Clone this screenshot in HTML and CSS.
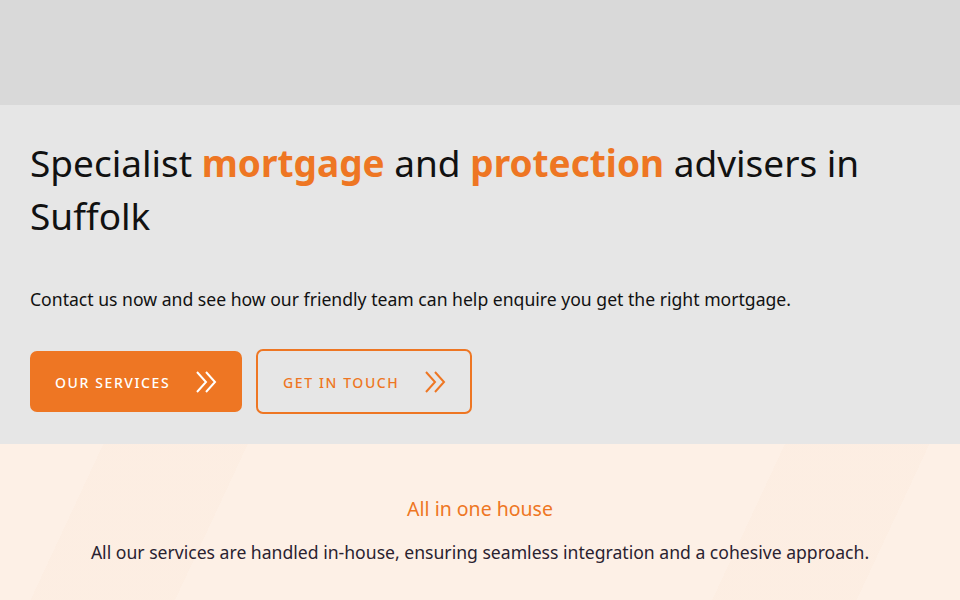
FILE: index.html
```html
<!DOCTYPE html>
<html lang="en">
<head>
<meta charset="utf-8">
<title>Specialist mortgage and protection advisers in Suffolk</title>
<link rel="stylesheet" href="styles.css">
</head>
<body>
<header class="topbar"></header>
<section class="hero">
  <h1 class="hero-title">Specialist <strong>mortgage</strong> and <strong>protection</strong> advisers in Suffolk</h1>
  <p class="hero-text">Contact us now and see how our friendly team can help enquire you get the right mortgage.</p>
  <div class="hero-actions">
    <a class="btn btn-solid" href="#"><span class="btn-label">OUR SERVICES</span>
      <svg class="chev" viewBox="0 0 24 22" width="24" height="22"><polyline points="2,1 11,11 2,21"/><polyline points="11,1 20,11 11,21"/></svg>
    </a>
    <a class="btn btn-outline" href="#"><span class="btn-label">GET IN TOUCH</span>
      <svg class="chev" viewBox="0 0 24 22" width="24" height="22"><polyline points="2,1 11,11 2,21"/><polyline points="11,1 20,11 11,21"/></svg>
    </a>
  </div>
</section>
<section class="house">
  <h2 class="house-title">All in one house</h2>
  <p class="house-text">All our services are handled in-house, ensuring seamless integration and a cohesive approach.</p>
</section>
</body>
</html>
```
FILE: styles.css
```css
* { box-sizing: border-box; }
html, body { margin: 0; padding: 0; }
body {
  font-family: "Noto Sans", "Open Sans", sans-serif;
  color: #111;
  background: #fdf0e6;
}
.topbar {
  height: 105px;
  background: #d9d9d9;
}
.hero {
  background: #e6e6e6;
  padding: 31px 30px 30px;
  height: 339px;
}
.hero-title {
  margin: 0;
  font-size: 37px;
  line-height: 53px;
  font-weight: 400;
  color: #111;
  max-width: 880px;
}
.hero-title strong {
  color: #ee7623;
  font-weight: 700;
}
.hero-text {
  margin: 44px 0 0;
  font-size: 17.6px;
  line-height: 26px;
}
.hero-actions {
  display: flex;
  align-items: center;
  gap: 14px;
  margin-top: 37px;
}
.btn {
  display: flex;
  align-items: center;
  flex-shrink: 0;
  text-decoration: none;
  font-size: 14px;
  letter-spacing: 1.6px;
  font-weight: 500;
  border-radius: 7px;
  white-space: nowrap;
}
.btn-label { padding-top: 1px; }
.chev {
  flex-shrink: 0;
  fill: none;
  stroke: currentColor;
  stroke-width: 2;
  stroke-linejoin: miter;
}
.btn-solid {
  width: 212px;
  height: 61px;
  padding: 0 25px;
  gap: 25px;
  background: #ee7623;
  color: #fff;
}
.btn-outline {
  width: 216px;
  height: 65px;
  padding: 0 25px;
  gap: 25px;
  border: 2px solid #ee7623;
  color: #ee7623;
}
.house {
  height: 156px;
  text-align: center;
  padding-top: 52px;
  background:
    linear-gradient(115deg, transparent 0 10%, rgba(250,228,210,0.18) 10% 24%, transparent 24% 76%, rgba(250,228,210,0.18) 76% 90%, transparent 90%),
    #fdf0e6;
}
.house-title {
  margin: 0;
  font-size: 19.5px;
  line-height: 26px;
  font-weight: 400;
  color: #ee7623;
}
.house-text {
  margin: 17px 0 0;
  font-size: 17.6px;
  line-height: 26px;
  color: #2a2230;
}
```
